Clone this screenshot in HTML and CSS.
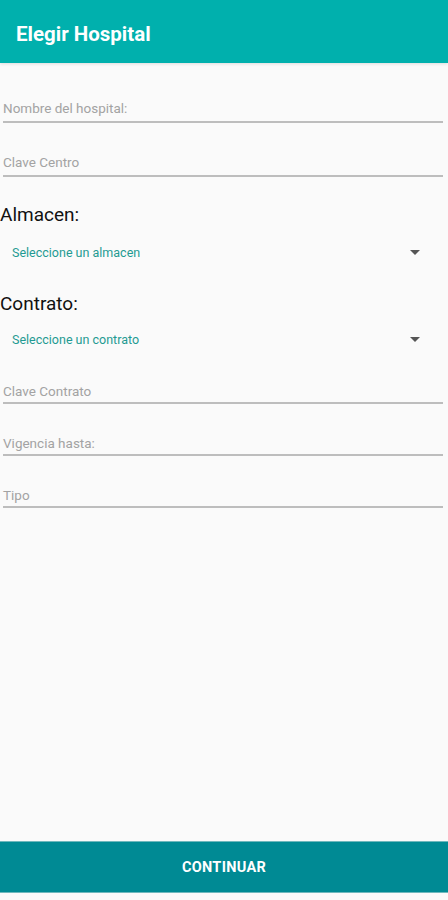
FILE: index.html
```html
<!DOCTYPE html>
<html lang="es">
<head>
  <meta charset="UTF-8" />
  <meta name="viewport" content="width=device-width, initial-scale=1.0"/>
  <title>Elegir Hospital</title>
  <link rel="stylesheet" href="styles.css">
</head>
<body>

  <header class="toolbar">
    <h1>Elegir Hospital</h1>
  </header>

  <main class="form">
    <div class="field field-first">
      <span class="hint">Nombre del hospital:</span>
    </div>
    <div class="field field-second">
      <span class="hint">Clave Centro</span>
    </div>

    <h2 class="section">Almacen:</h2>
    <div class="spinner">
      <span>Seleccione un almacen</span>
      <i class="arrow"></i>
    </div>

    <h2 class="section section-second">Contrato:</h2>
    <div class="spinner spinner-second">
      <span>Seleccione un contrato</span>
      <i class="arrow"></i>
    </div>

    <div class="field field-low field-after">
      <span class="hint">Clave Contrato</span>
    </div>
    <div class="field field-low">
      <span class="hint">Vigencia hasta:</span>
    </div>
    <div class="field field-low">
      <span class="hint">Tipo</span>
    </div>
  </main>

  <button class="continue">CONTINUAR</button>

</body>
</html>
```

FILE: styles.css
```css
:root {
  --teal: #00b0ad;
  --teal-dark: #008a94;
  --bg: #fafafa;
}

* {
  box-sizing: border-box;
  font-family: Roboto, "Liberation Sans", sans-serif;
}

body {
  margin: 0;
  background: var(--bg);
  height: 900px;
  display: flex;
  flex-direction: column;
}

.toolbar {
  height: 63px;
  background: var(--teal);
  display: flex;
  align-items: center;
  padding: 0 16px;
  box-shadow: 0 1px 3px rgba(0, 0, 0, 0.12);
}

.toolbar h1 {
  margin: 0;
  color: #fff;
  font-size: 20.5px;
  font-weight: 700;
  padding-top: 5px;
}

.form {
  flex: 1;
  display: flex;
  flex-direction: column;
}

.field {
  margin: 0 5px 0 3px;
  height: 52px;
  display: flex;
  align-items: flex-end;
  padding-bottom: 5px;
  border-bottom: 2px solid #bdbdbd;
}

.field-first {
  height: 60px;
}

.field-second {
  height: 54px;
}

.field-low {
  padding-bottom: 3px;
}

.field-after {
  height: 49px;
}

.hint {
  font-size: 13.5px;
  color: #a3a3a3;
}

.section {
  margin: 27px 0 0;
  font-size: 19px;
  font-weight: 400;
  color: #111;
  line-height: 22px;
}

.section-second {
  margin-top: 25px;
}

.spinner {
  height: 32px;
  margin-top: 10px;
  padding: 0 28px 0 12px;
  display: flex;
  align-items: center;
  justify-content: space-between;
}

.spinner-second {
  margin-top: 8px;
}

.spinner span {
  font-size: 12.5px;
  color: #1f9a92;
}

.arrow {
  width: 0;
  height: 0;
  border-left: 5px solid transparent;
  border-right: 5px solid transparent;
  border-top: 5px solid #555;
}

.continue {
  margin-bottom: 7px;
  height: 52px;
  border: none;
  background: var(--teal-dark);
  color: #fff;
  font-size: 14.5px;
  font-weight: 700;
  letter-spacing: 0.3px;
  border-top: 1px solid #6fb8bd;
  border-bottom: 1px solid #6fb8bd;
}
```
